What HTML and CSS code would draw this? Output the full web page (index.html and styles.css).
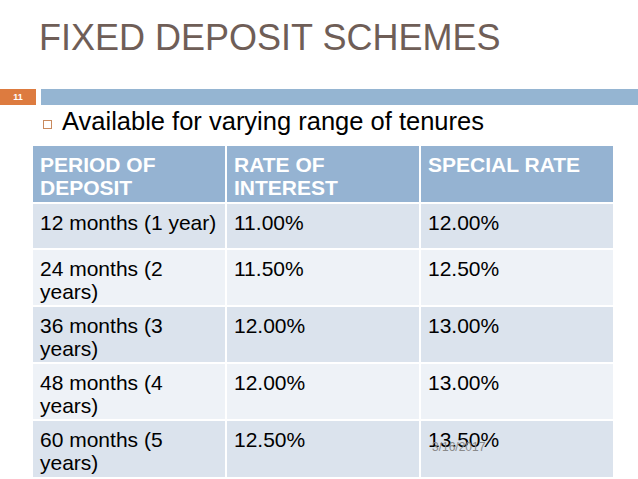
FILE: index.html
```html
<!DOCTYPE html>
<html>
<head>
<meta charset="utf-8">
<link rel="stylesheet" href="styles.css">
</head>
<body>
<div class="slide">
  <h1 class="title">FIXED DEPOSIT SCHEMES</h1>
  <div class="band">
    <div class="num">11</div>
    <div class="bar"></div>
  </div>
  <div class="bullet">
    <span class="box"></span>
    <span class="btext">Available for varying range of tenures</span>
  </div>
  <div class="table">
    <div class="cell head">PERIOD OF DEPOSIT</div>
    <div class="cell head">RATE OF INTEREST</div>
    <div class="cell head">SPECIAL RATE</div>

    <div class="cell odd r1">12 months (1 year)</div>
    <div class="cell odd r1">11.00%</div>
    <div class="cell odd r1">12.00%</div>

    <div class="cell even">24 months (2 years)</div>
    <div class="cell even">11.50%</div>
    <div class="cell even">12.50%</div>

    <div class="cell odd">36 months (3 years)</div>
    <div class="cell odd">12.00%</div>
    <div class="cell odd">13.00%</div>

    <div class="cell even">48 months (4 years)</div>
    <div class="cell even">12.00%</div>
    <div class="cell even">13.00%</div>

    <div class="cell odd">60 months (5 years)</div>
    <div class="cell odd">12.50%</div>
    <div class="cell odd">13.50%</div>
  </div>
  <div class="date">3/16/2017</div>
</div>
</body>
</html>
```

FILE: styles.css
```css
html, body {
  margin: 0;
  padding: 0;
  background: #ffffff;
}

.slide {
  position: relative;
  width: 638px;
  height: 479px;
  overflow: hidden;
  font-family: "Liberation Sans", Arial, sans-serif;
}

.title {
  margin: 20px 0 0 0;
  padding-left: 39px;
  font-size: 36px;
  line-height: 36px;
  font-weight: normal;
  color: #6f5e57;
  letter-spacing: 0;
}

.band {
  display: flex;
  gap: 5px;
  margin-top: 33px;
  height: 16px;
}

.num {
  width: 36px;
  background: #dd7b3f;
  color: #ffffff;
  font-size: 9px;
  font-weight: bold;
  line-height: 16px;
  text-align: center;
}

.bar {
  flex: 1;
  background: #95b5d2;
}

.bullet {
  display: flex;
  align-items: center;
  margin-top: 1px;
  height: 30px;
  padding-left: 43px;
}

.box {
  width: 7px;
  height: 7px;
  border: 1px solid #c98a5e;
  margin-top: 6px;
  margin-right: 10px;
}

.btext {
  font-size: 25.5px;
  line-height: 30px;
  color: #000000;
}

.table {
  display: grid;
  grid-template-columns: 192px 192px 192px;
  grid-template-rows: 56px 44px 55px 55px 55px 56px;
  gap: 2px;
  margin-top: 10px;
  margin-left: 33px;
  width: 580px;
  background: #ffffff;
}

.cell {
  padding: 7px 2px 0 7px;
  font-size: 21px;
  line-height: 23px;
  color: #000000;
}

.head {
  background: #95b3d2;
  color: #ffffff;
  font-weight: bold;
}

.odd {
  background: #dbe3ed;
}

.even {
  background: #eef2f7;
}

.date {
  position: absolute;
  left: 432px;
  top: 441px;
  font-size: 12px;
  line-height: 12px;
  color: #8a8a8a;
}
```
